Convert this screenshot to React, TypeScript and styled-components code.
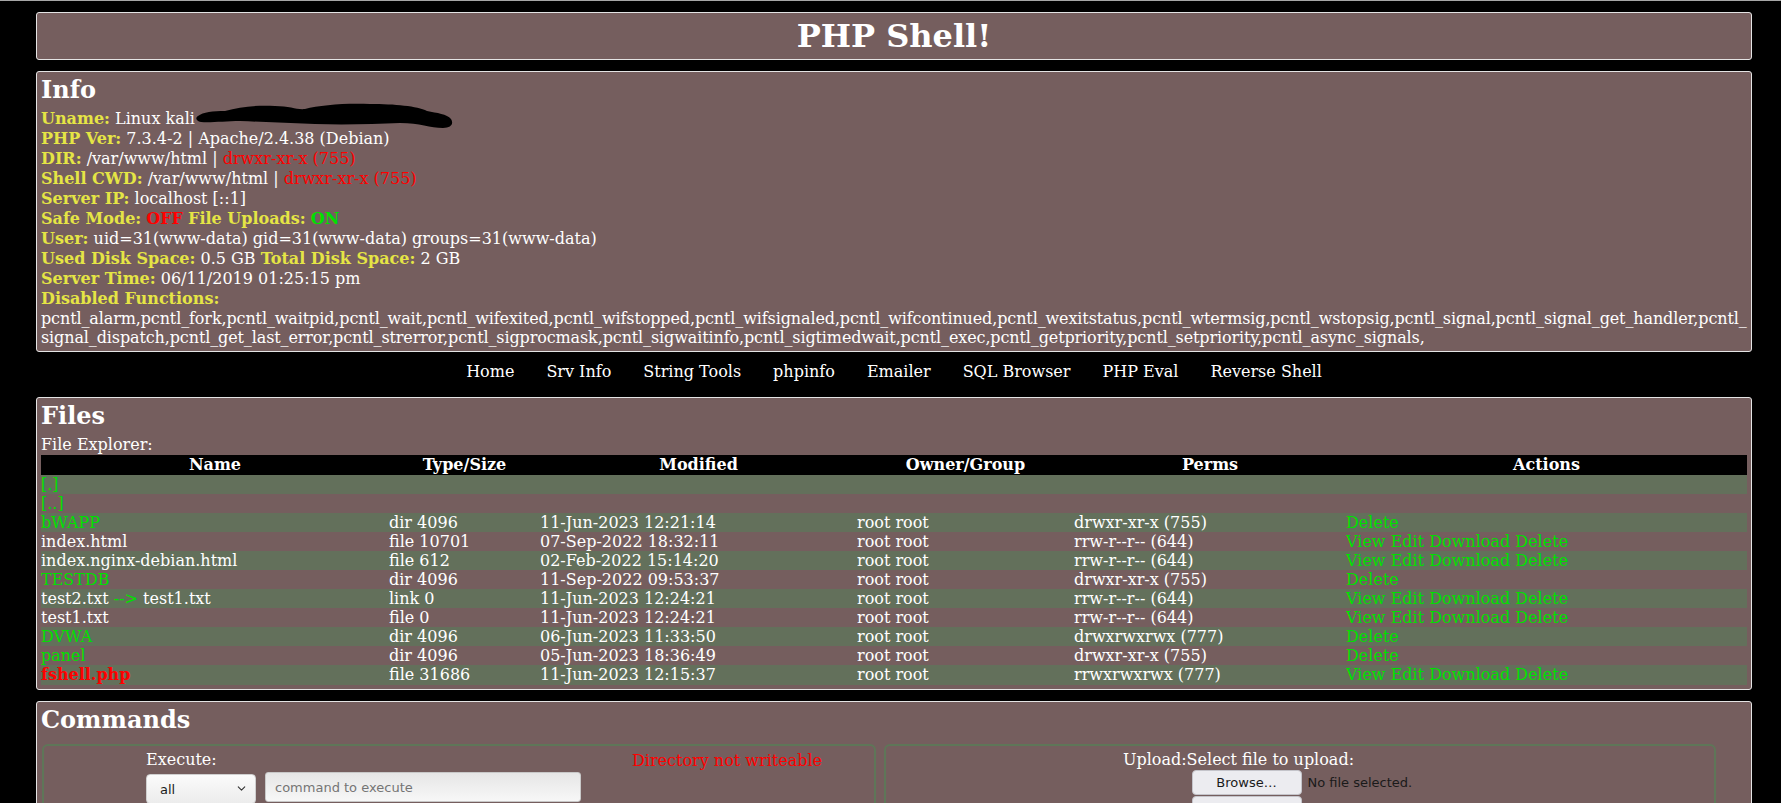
import React from "react";
import styled, { createGlobalStyle } from "styled-components";
import { ChevronDown } from "lucide-react";

const C = {
  brown: "#755e5e",
  green: "#63705b",
  yellow: "#e5e545",
  red: "#ff0000",
  link: "#00e000",
  text: "#ffffff",
  frame: "#e4e4e4",
};

const Global = createGlobalStyle`
  html, body { margin: 0; padding: 0; background: #000; }
  body {
    font-family: "DejaVu Serif", serif;
    font-size: 16px;
    color: ${C.text};
    border-top: 1px solid #a6a6a6;
  }
  * { box-sizing: border-box; }
`;

const Page = styled.div`
  padding: 11px 29px 0 36px;
`;

const Panel = styled.section<{ $gapAfter?: number }>`
  background: ${C.brown};
  border: 1px solid ${C.frame};
  border-radius: 3px;
  padding: 4px;
  margin-bottom: ${(p) => p.$gapAfter ?? 0}px;
`;

const Title = styled.h1`
  margin: 0;
  font-size: 32px;
  line-height: 38px;
  font-weight: bold;
  text-align: center;
`;

const Heading = styled.h2`
  margin: 0 0 5px;
  font-size: 24px;
  line-height: 28px;
  font-weight: bold;
`;

const Line = styled.div<{ $h?: number }>`
  line-height: ${(p) => p.$h ?? 20}px;
  white-space: nowrap;
`;

const FnLine = styled.div`
  line-height: 19px;
  white-space: nowrap;
  letter-spacing: -0.12px;
`;

const Label = styled.b`
  color: ${C.yellow};
  font-weight: bold;
`;

const Red = styled.span<{ $bold?: boolean }>`
  color: ${C.red};
  font-weight: ${(p) => (p.$bold ? "bold" : "normal")};
`;

const Green = styled.span<{ $bold?: boolean }>`
  color: ${C.link};
  font-weight: ${(p) => (p.$bold ? "bold" : "normal")};
`;

const Scribble = styled.svg`
  display: inline-block;
  vertical-align: top;
  margin: -6px 0 -7px 0;
`;

const Nav = styled.nav`
  display: flex;
  justify-content: center;
  gap: 32px;
  padding: 10px 0 16px;
  line-height: 19px;
`;

const NavLink = styled.a`
  color: ${C.text};
  text-decoration: none;
`;

const Table = styled.table`
  width: 100%;
  border-collapse: collapse;
  border-spacing: 0;
  table-layout: fixed;
`;

const Th = styled.th`
  background: #000;
  color: #fff;
  font-weight: bold;
  text-align: center;
  padding: 0;
  height: 20px;
  line-height: 20px;
`;

const Tr = styled.tr<{ $alt: boolean }>`
  background: ${(p) => (p.$alt ? C.green : C.brown)};
`;

const Td = styled.td<{ $tall?: boolean }>`
  padding: 0;
  height: ${(p) => (p.$tall ? 20 : 19)}px;
  line-height: ${(p) => (p.$tall ? 20 : 19)}px;
  white-space: nowrap;
  text-align: left;
  vertical-align: middle;
  overflow: hidden;
`;

const FileLink = styled.a<{ $kind: string }>`
  text-decoration: none;
  color: ${(p) =>
    p.$kind === "dir" ? C.link : p.$kind === "self" ? C.red : C.text};
  font-weight: ${(p) => (p.$kind === "self" ? "bold" : "normal")};
`;

const Action = styled.a`
  color: ${C.link};
  text-decoration: none;
`;

const FieldRow = styled.div`
  display: flex;
  gap: 8px;
  margin: 10px 0 0 1px;
`;

const FieldBox = styled.fieldset<{ $w: number }>`
  width: ${(p) => p.$w}px;
  margin: 0;
  border: 2px solid #5e7658;
  border-radius: 6px;
  padding: 4px 0 20px;
  min-height: 120px;
`;

const ExecGrid = styled.div`
  display: grid;
  grid-template-columns: 486px auto;
  padding-left: 102px;
`;

const TextLine = styled.div`
  line-height: 19px;
`;

const ErrText = styled.div`
  color: ${C.red};
  line-height: 19px;
  padding-top: 1px;
`;

const Controls = styled.div`
  display: flex;
  align-items: flex-start;
  gap: 9px;
  margin-top: 3px;
`;

const SelectWrap = styled.div`
  position: relative;
  width: 110px;
  height: 30px;
  margin-top: 2px;
`;

const Select = styled.select`
  appearance: none;
  width: 100%;
  height: 100%;
  border: 1px solid #cfcfcf;
  border-radius: 4px;
  background: linear-gradient(#fbfbfb, #ececec);
  font-family: "DejaVu Sans", sans-serif;
  font-size: 13px;
  color: #1c1c1c;
  padding: 0 0 0 13px;
`;

const Chevron = styled.span`
  position: absolute;
  right: 8px;
  top: 8px;
  color: #333;
  display: flex;
  pointer-events: none;
`;

const CmdInput = styled.input`
  width: 316px;
  height: 30px;
  border: 1px solid #c8c8c8;
  border-radius: 3px;
  background: linear-gradient(#e6e6e6, #f7f7f7);
  font-family: "DejaVu Sans", sans-serif;
  font-size: 13px;
  padding: 0 9px;
  color: #222;
  &::placeholder {
    color: #757575;
  }
`;

const UploadCol = styled.div`
  display: flex;
  flex-direction: column;
  align-items: center;
`;

const UploadTitle = styled.div`
  line-height: 19px;
  padding-right: 123px;
`;

const FilePick = styled.div`
  display: flex;
  align-items: center;
  gap: 6px;
  margin-top: 1px;
  padding-left: 4px;
`;

const Btn = styled.button`
  width: 110px;
  height: 25px;
  border: 1px solid #c4c4ca;
  border-radius: 4px;
  background: #ececf0;
  color: #1b1b1b;
  font-family: "DejaVu Sans", sans-serif;
  font-size: 13px;
  padding: 0;
`;

const Stack = styled.div`
  display: flex;
  flex-direction: column;
  align-self: center;
  margin: 1px 106px 0 0;
`;

const NoFile = styled.span`
  font-family: "DejaVu Sans", sans-serif;
  font-size: 13px;
  color: #1a1a1a;
  width: 105px;
  white-space: nowrap;
`;

type Row = {
  name: string;
  kind: "dir" | "file" | "link" | "self" | "nav";
  target?: string;
  size?: string;
  mod?: string;
  owner?: string;
  perms?: string;
  actions?: "dir" | "file";
};

const rows: Row[] = [
  { name: "[.]", kind: "nav" },
  { name: "[..]", kind: "nav" },
  { name: "bWAPP", kind: "dir", size: "dir 4096", mod: "11-Jun-2023 12:21:14", owner: "root root", perms: "drwxr-xr-x (755)", actions: "dir" },
  { name: "index.html", kind: "file", size: "file 10701", mod: "07-Sep-2022 18:32:11", owner: "root root", perms: "rrw-r--r-- (644)", actions: "file" },
  { name: "index.nginx-debian.html", kind: "file", size: "file 612", mod: "02-Feb-2022 15:14:20", owner: "root root", perms: "rrw-r--r-- (644)", actions: "file" },
  { name: "TESTDB", kind: "dir", size: "dir 4096", mod: "11-Sep-2022 09:53:37", owner: "root root", perms: "drwxr-xr-x (755)", actions: "dir" },
  { name: "test2.txt", kind: "link", target: "test1.txt", size: "link 0", mod: "11-Jun-2023 12:24:21", owner: "root root", perms: "rrw-r--r-- (644)", actions: "file" },
  { name: "test1.txt", kind: "file", size: "file 0", mod: "11-Jun-2023 12:24:21", owner: "root root", perms: "rrw-r--r-- (644)", actions: "file" },
  { name: "DVWA", kind: "dir", size: "dir 4096", mod: "06-Jun-2023 11:33:50", owner: "root root", perms: "drwxrwxrwx (777)", actions: "dir" },
  { name: "panel", kind: "dir", size: "dir 4096", mod: "05-Jun-2023 18:36:49", owner: "root root", perms: "drwxr-xr-x (755)", actions: "dir" },
  { name: "fshell.php", kind: "self", size: "file 31686", mod: "11-Jun-2023 12:15:37", owner: "root root", perms: "rrwxrwxrwx (777)", actions: "file" },
];

const cols = [348, 151, 317, 217, 272, 401];
const heads = ["Name", "Type/Size", "Modified", "Owner/Group", "Perms", "Actions"];

const navItems = ["Home", "Srv Info", "String Tools", "phpinfo", "Emailer", "SQL Browser", "PHP Eval", "Reverse Shell"];

const fn1 =
  "pcntl_alarm,pcntl_fork,pcntl_waitpid,pcntl_wait,pcntl_wifexited,pcntl_wifstopped,pcntl_wifsignaled,pcntl_wifcontinued,pcntl_wexitstatus,pcntl_wtermsig,pcntl_wstopsig,pcntl_signal,pcntl_signal_get_handler,pcntl_";
const fn2 =
  "signal_dispatch,pcntl_get_last_error,pcntl_strerror,pcntl_sigprocmask,pcntl_sigwaitinfo,pcntl_sigtimedwait,pcntl_exec,pcntl_getpriority,pcntl_setpriority,pcntl_async_signals,";

function Redaction() {
  return (
    <Scribble width="258" height="27" viewBox="0 0 258 27" aria-hidden>
      <path
        d="M3,13 C8,9 18,8 30,8 C45,4 60,2 80,3 C95,3 102,7 110,6 C125,2 150,0 175,1 C200,1 222,3 232,8 C242,10 252,11 256,16 C259,21 256,25 248,25 C235,25 225,20 205,20 C180,21 150,22 120,21 C95,20 70,19 45,18 C30,18 15,20 6,19 C1,18 0,15 3,13 Z"
        fill="#000"
      />
    </Scribble>
  );
}

function NameCell({ r }: { r: Row }) {
  if (r.kind === "nav") return <FileLink $kind="dir">{r.name}</FileLink>;
  if (r.kind === "link")
    return (
      <>
        <FileLink $kind="file">{r.name}</FileLink>
        <Green> --&gt; </Green>
        {r.target}
      </>
    );
  return <FileLink $kind={r.kind}>{r.name}</FileLink>;
}

export default function App() {
  return (
    <>
      <Global />
      <Page>
        <Panel $gapAfter={11}>
          <Title>PHP Shell!</Title>
        </Panel>

        <Panel>
          <Heading>Info</Heading>
          <Line>
            <Label>Uname:</Label> Linux kali
            <Redaction />
          </Line>
          <Line>
            <Label>PHP Ver:</Label> 7.3.4-2 | Apache/2.4.38 (Debian)
          </Line>
          <Line>
            <Label>DIR:</Label> /var/www/html | <Red>drwxr-xr-x (755)</Red>
          </Line>
          <Line>
            <Label>Shell CWD:</Label> /var/www/html | <Red>drwxr-xr-x (755)</Red>
          </Line>
          <Line>
            <Label>Server IP:</Label> localhost [::1]
          </Line>
          <Line>
            <Label>Safe Mode:</Label> <Red $bold>OFF</Red> <Label>File Uploads:</Label>{" "}
            <Green $bold>ON</Green>
          </Line>
          <Line>
            <Label>User:</Label> uid=31(www-data) gid=31(www-data) groups=31(www-data)
          </Line>
          <Line>
            <Label>Used Disk Space:</Label> 0.5 GB <Label>Total Disk Space:</Label> 2 GB
          </Line>
          <Line>
            <Label>Server Time:</Label> 06/11/2019 01:25:15 pm
          </Line>
          <Line>
            <Label>Disabled Functions:</Label>
          </Line>
          <FnLine>{fn1}</FnLine>
          <FnLine>{fn2}</FnLine>
        </Panel>

        <Nav>
          {navItems.map((n) => (
            <NavLink key={n} href="#">
              {n}
            </NavLink>
          ))}
        </Nav>

        <Panel $gapAfter={11}>
          <Heading>Files</Heading>
          <Line>File Explorer:</Line>
          <Table>
            <colgroup>
              {cols.map((w, i) => (
                <col key={i} style={{ width: w }} />
              ))}
            </colgroup>
            <thead>
              <tr>
                {heads.map((h) => (
                  <Th key={h}>{h}</Th>
                ))}
              </tr>
            </thead>
            <tbody>
              {rows.map((r, i) => {
                const tall = r.kind === "self";
                return (
                  <Tr key={r.name} $alt={i % 2 === 0}>
                    <Td $tall={tall}>
                      <NameCell r={r} />
                    </Td>
                    <Td $tall={tall}>{r.size}</Td>
                    <Td $tall={tall}>{r.mod}</Td>
                    <Td $tall={tall}>{r.owner}</Td>
                    <Td $tall={tall}>{r.perms}</Td>
                    <Td $tall={tall}>
                      {r.actions === "dir" && <Action href="#">Delete</Action>}
                      {r.actions === "file" && (
                        <>
                          <Action href="#">View</Action> <Action href="#">Edit</Action>{" "}
                          <Action href="#">Download</Action> <Action href="#">Delete</Action>
                        </>
                      )}
                    </Td>
                  </Tr>
                );
              })}
            </tbody>
          </Table>
        </Panel>

        <Panel>
          <Heading>Commands</Heading>
          <FieldRow>
            <FieldBox $w={834}>
              <ExecGrid>
                <div>
                  <TextLine>Execute:</TextLine>
                  <Controls>
                    <SelectWrap>
                      <Select defaultValue="all">
                        <option value="all">all</option>
                        <option value="system">system</option>
                        <option value="exec">exec</option>
                      </Select>
                      <Chevron>
                        <ChevronDown size={13} strokeWidth={2} />
                      </Chevron>
                    </SelectWrap>
                    <CmdInput placeholder="command to execute" />
                  </Controls>
                </div>
                <ErrText>Directory not writeable</ErrText>
              </ExecGrid>
            </FieldBox>
            <FieldBox $w={832}>
              <UploadCol>
                <UploadTitle>Upload:Select file to upload:</UploadTitle>
                <FilePick>
                  <Btn type="button">Browse…</Btn>
                  <NoFile>No file selected.</NoFile>
                </FilePick>
                <Stack>
                  <Btn type="button">Upload File</Btn>
                </Stack>
              </UploadCol>
            </FieldBox>
          </FieldRow>
        </Panel>
      </Page>
    </>
  );
}
